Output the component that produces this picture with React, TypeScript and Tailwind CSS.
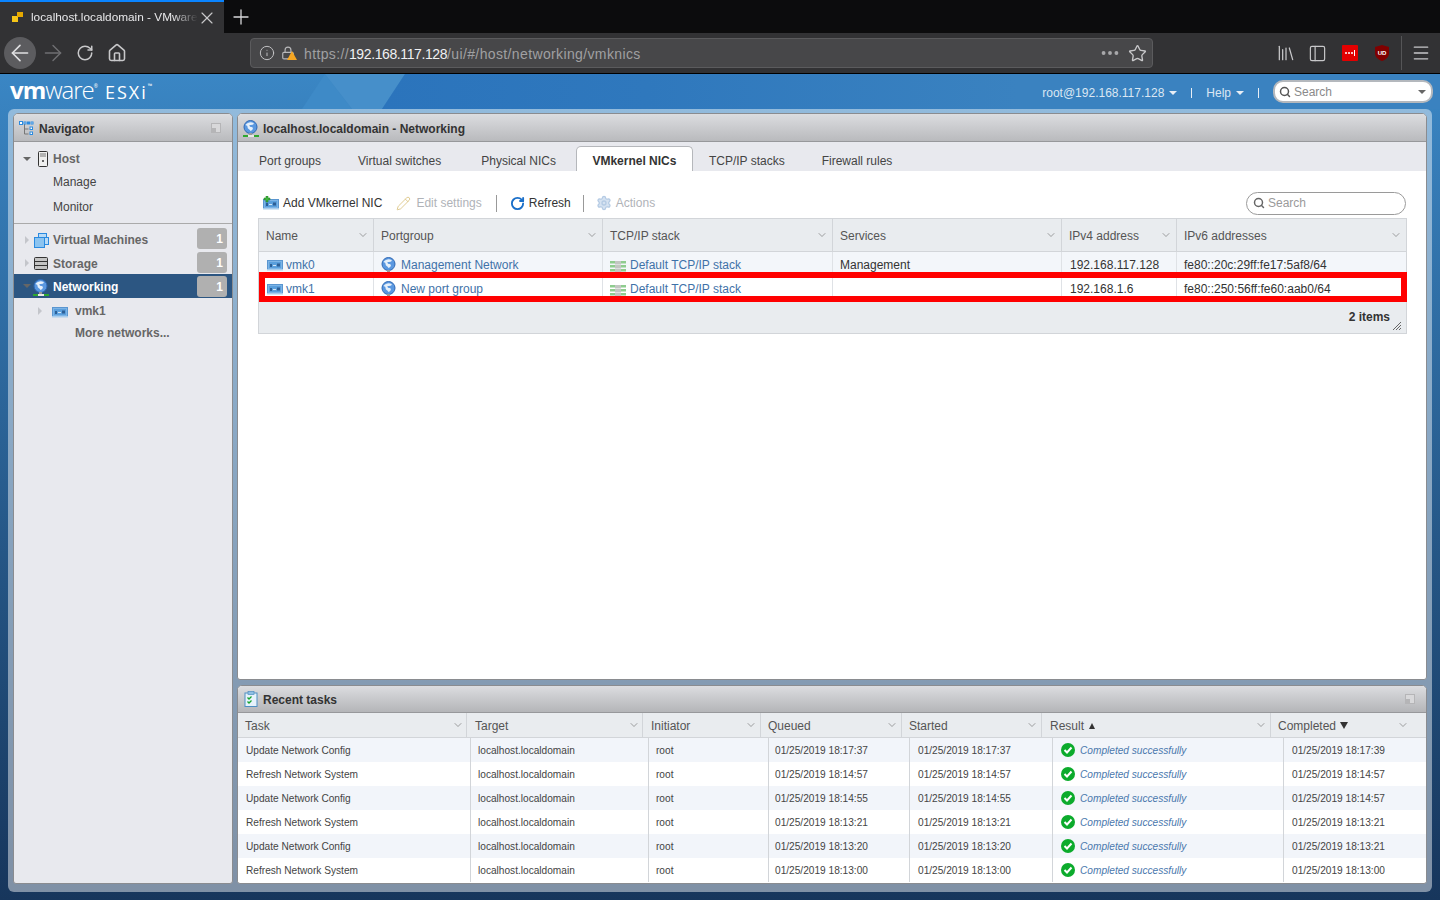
import { ArrowLeft, ArrowRight, ChevronDown, Home, Info, Library, Lock, Menu, MoreHorizontal, PanelLeft, Pencil, Plus, RotateCw, Search, Settings, Star, X } from "lucide-react";

// --- small drawn icons ---
const GlobeIcon = ({ className = "" }: { className?: string }) => (
  <svg width="16" height="17" viewBox="0 0 16 17" className={`shrink-0 mt-[2px] ${className}`}>
    <g transform="translate(-0.5 0)">
      <circle cx="8" cy="7" r="6.500" fill="#5a98e0" stroke="#2f68b4" />
      <path d="M3 5c2-3 6-3.500 8-2 1 1-1 2-3 2s-1 2 1 2 2 3-1 4c-1-2-3-2-3-4S4 6 3 5z" fill="#e6f0fa" />
    </g>
    <rect x="6" y="13" width="3" height="2" fill="#9a9a9a" />
    <rect x="0" y="15" width="16" height="2" fill="#2fa82f" />
    <rect x="5" y="15" width="6" height="2" fill="#e8e8e8" />
  </svg>
);

const NicIcon = ({ plus = false }: { plus?: boolean }) => (
  <svg width="16" height="14" viewBox="0 0 16 14" className="shrink-0">
    <rect x="0.500" y="3.500" width="15" height="9" fill="#7db4e6" stroke="#5a96d0" />
    <rect x="2" y="5" width="12" height="6" fill="#5a9fdc" />
    <rect x="3" y="7" width="2" height="3" fill="#2c5f96" />
    <rect x="6" y="8" width="3" height="1" fill="#d5e6f5" />
    <rect x="10" y="6.500" width="3" height="3" fill="#2c5f96" />
    <rect x="0" y="12" width="16" height="1.500" fill="#a9cdec" />
    {plus && <path d="M3 0v2H1v2h2v2h2V4h2V2H5V0z" fill="#3fb53f" stroke="#1f7a1f" strokeWidth="0.500" />}
  </svg>
);

const StackIcon = () => (
  <svg width="16" height="11" viewBox="0 0 16 11" className="shrink-0 mt-[4px]">
    {[0, 4, 8].map((y) => (
      <g key={y}>
        <rect x="0" y={y} width="16" height="2.500" fill="#8fcc8f" />
        <rect x="5" y={y - 0.500} width="6" height="3.500" fill="#c2c6c2" />
      </g>
    ))}
  </svg>
);

const CheckIcon = () => (
  <svg width="14" height="14" viewBox="0 0 14 14" className="shrink-0">
    <circle cx="7" cy="7" r="7" fill="#0cab2c" />
    <path d="M3.500 7l2.500 2.500 4.500-5" fill="none" stroke="#fff" strokeWidth="2" />
  </svg>
);

const TasksIcon = () => (
  <svg width="14" height="16" viewBox="0 0 14 16" className="shrink-0">
    <rect x="1" y="2" width="12" height="13.500" fill="#e6f2fb" stroke="#4f8fc2" />
    <rect x="4" y="0.500" width="6" height="3" fill="#8fbfe4" stroke="#4f8fc2" strokeWidth="0.700" />
    <path d="M3.500 6.500l1.500 1.500 2.500-2.500M3.500 10.500l1.500 1.500 2.500-2.500" fill="none" stroke="#17a52f" strokeWidth="1.300" />
  </svg>
);

const NavigatorIcon = () => (
  <svg width="16" height="16" viewBox="0 0 16 16" className="shrink-0">
    <path d="M5.500 4v10h4M5.500 9h4" fill="none" stroke="#777" />
    <g fill="#fff" stroke="#2a8ae0">
      <rect x="0.500" y="1.500" width="3" height="3" />
      <rect x="5" y="2" width="2" height="2" />
      <rect x="8.500" y="2" width="2" height="2" />
      <rect x="12" y="2" width="2" height="2" />
      <rect x="11" y="7" width="2.500" height="2.500" />
      <rect x="11" y="12" width="2.500" height="2.500" />
    </g>
  </svg>
);

const HostIcon = () => (
  <svg width="10" height="16" viewBox="0 0 10 16">
    <rect x="0.500" y="0.500" width="9" height="15" rx="1" fill="#efefef" stroke="#333" />
    <path d="M2 3h6M2 5h6" stroke="#777" />
    <rect x="4" y="9" width="2" height="2" fill="#666" />
  </svg>
);

const VmIcon = () => (
  <svg width="15" height="15" viewBox="0 0 15 15">
    <rect x="4.500" y="0.500" width="8" height="8" fill="#b9dbf6" stroke="#2a8ae0" />
    <rect x="7.500" y="4.500" width="7" height="7" fill="#b9dbf6" stroke="#2a8ae0" />
    <rect x="0.500" y="4.500" width="10" height="10" fill="#8cc4f0" stroke="#2a8ae0" />
  </svg>
);

const StorageIcon = () => (
  <svg width="14" height="13" viewBox="0 0 14 13">
    <rect x="0.500" y="0.500" width="13" height="12" rx="1" fill="#c4c4c4" stroke="#333" />
    <path d="M0.500 4.500h13M0.500 8.500h13" stroke="#333" />
  </svg>
);

const PanelIcon = () => (
  <svg width="10" height="10" viewBox="0 0 10 10" className="shrink-0">
    <rect x="0.500" y="0.500" width="9" height="9" fill="#d8d8da" stroke="#b5b5b7" />
    <rect x="1" y="5" width="4" height="4" fill="#b5b5b7" />
  </svg>
);

const Caret = ({ className }: { className: string }) => (
  <span className={`w-0 h-0 border-x-[4px] border-x-transparent border-t-[4px] ${className}`} />
);

const RightCaret = () => <span className="w-0 h-0 border-y-[4px] border-y-transparent border-l-[4px] border-l-[#c4c6cb]" />;

const ColHead = ({ label, sort, pad, pr = "pr-[4px]" }: { label: string; sort?: "up" | "down"; pad: string; pr?: string }) => (
  <div className={`flex items-center justify-between border-r border-[#d2d5d9] last:border-r-0 text-[#555] ${pad} ${pr}`}>
    <span className="flex items-center pt-[1px]">
      {label}
      {sort === "up" && <span className="ml-[5px] w-0 h-0 border-x-[3px] border-x-transparent border-b-[6px] border-b-[#333]" />}
      {sort === "down" && <span className="ml-[4px] w-0 h-0 border-x-[4px] border-x-transparent border-t-[7px] border-t-[#333]" />}
    </span>
    <ChevronDown size={12} strokeWidth={1.200} className="text-[#666]" />
  </div>
);

const Badge = () => (
  <span className="w-[30px] h-[21px] bg-[#b0b0b0] rounded-[3px] text-white font-bold text-right pr-[4px] leading-[22px]">1</span>
);

const NavRow = ({ icon, label, height, labelPad = "" }: { icon: React.ReactNode; label: string; height: string; labelPad?: string }) => (
  <div className={`flex items-center pl-[10px] pr-[5px] ${height}`}>
    <span className="w-[6px] flex justify-center"><RightCaret /></span>
    <span className="w-[16px] ml-[3px] flex justify-center">{icon}</span>
    <span className={`ml-[4px] flex-1 font-bold text-[#666] ${labelPad}`}>{label}</span>
    <span className="self-start flex"><Badge /></span>
  </div>
);

const vmkRows = [
  { name: "vmk0", group: "Management Network", services: "Management", ipv4: "192.168.117.128", ipv6: "fe80::20c:29ff:fe17:5af8/64", bg: "bg-[#f3f6fa]" },
  { name: "vmk1", group: "New port group", services: "", ipv4: "192.168.1.6", ipv6: "fe80::250:56ff:fe60:aab0/64", bg: "bg-white" },
];

const tasks = [
  ["Update Network Config", "18:17:37", "18:17:37", "18:17:39"],
  ["Refresh Network System", "18:14:57", "18:14:57", "18:14:57"],
  ["Update Network Config", "18:14:55", "18:14:55", "18:14:57"],
  ["Refresh Network System", "18:13:21", "18:13:21", "18:13:21"],
  ["Update Network Config", "18:13:20", "18:13:20", "18:13:21"],
  ["Refresh Network System", "18:13:00", "18:13:00", "18:13:00"],
];

const App = () => {
  return (
    <div className="w-[1440px] h-[900px] overflow-hidden flex flex-col text-[12px] text-[#333] font-['Liberation_Sans',Arial,sans-serif]">
      {/* browser tab strip */}
      <div className="h-[33px] bg-[#0c0c0d] flex shrink-0">
        <div className="w-[224px] bg-[#323234] border-t-2 border-[#0a84ff] flex items-center pl-[11px] text-[#e8e8ea]">
          <svg width="14" height="14" viewBox="0 0 14 14" className="shrink-0">
            <rect x="1" y="5" width="6" height="6" fill="#f5c518" />
            <rect x="6" y="1" width="6" height="5" fill="#e5a800" />
          </svg>
          <span className="ml-[6px] w-[167px] text-[11.800px] whitespace-nowrap [mask-image:linear-gradient(to_right,black_85%,transparent)]">localhost.localdomain - VMware</span>
          <X size={20} strokeWidth={1.400} className="-ml-[1px] text-[#c8c8ca]" />
        </div>
        <div className="w-[34px] flex items-center justify-center text-[#d8d8da]">
          <Plus size={24} strokeWidth={1.300} />
        </div>
      </div>

      {/* browser toolbar */}
      <div className="h-[41px] bg-[#323234] border-b border-black flex items-center shrink-0 text-[#c8c8ca]">
        <div className="ml-[4px] w-[32px] h-[32px] rounded-full bg-[#5c5c5f] flex items-center justify-center text-[#e0e0e2]">
          <ArrowLeft size={26} strokeWidth={1.500} />
        </div>
        <ArrowRight size={26} strokeWidth={1.300} className="ml-[4px] text-[#6f6f72]" />
        <RotateCw size={18} strokeWidth={2} className="ml-[10px]" />
        <Home size={20} strokeWidth={1.900} className="ml-[13px]" />
        <div className="ml-[123px] w-[903px] h-[30px] bg-[#474749] border border-[#5b5b5d] rounded-[4px] flex items-center pl-[8px] pr-[5px]">
          <Info size={16} strokeWidth={1.400} />
          <span className="relative ml-[6px] w-[15px] flex">
            <Lock size={14} strokeWidth={2} className="text-[#b8b8ba]" />
            <span className="absolute left-[6px] top-[5px] w-0 h-0 border-x-[5px] border-x-transparent border-b-[9px] border-b-[#f5a623]" />
          </span>
          <span className="ml-[8px] pt-[2px] text-[14px] tracking-[0.370px] text-[#a0a0a2]">
            https://<span className="text-[#f0f0f2] tracking-[-0.400px]">192.168.117.128</span>/ui/#/host/networking/vmknics
          </span>
          <MoreHorizontal size={22} strokeWidth={2.200} className="ml-auto text-[#a8a8aa]" />
          <Star size={19} strokeWidth={1.700} className="ml-[7px]" />
        </div>
        <Library size={20} strokeWidth={1.500} className="ml-[123px]" />
        <PanelLeft size={19} strokeWidth={1.500} className="ml-[12px]" />
        <div className="ml-[15px] w-[16px] h-[16px] bg-[#e30000] rounded-[1px] flex items-center justify-center gap-[1px]">
          <span className="w-[2px] h-[2px] rounded-full bg-white" />
          <span className="w-[2px] h-[2px] rounded-full bg-white" />
          <span className="w-[2px] h-[2px] rounded-full bg-white" />
          <span className="w-[1px] h-[6px] bg-white" />
        </div>
        <svg width="14" height="16" viewBox="0 0 14 16" className="ml-[17px]">
          <path d="M7 0l7 2v6c0 4-3 6.500-7 8-4-1.500-7-4-7-8V2z" fill="#800000" />
          <text x="7" y="10" textAnchor="middle" fontSize="6" fontWeight="bold" fill="#fff" fontFamily="Liberation Sans">UD</text>
        </svg>
        <span className="ml-[12px] w-px h-[34px] bg-[#555557]" />
        <Menu size={20} strokeWidth={1.600} className="ml-[9px]" />
      </div>

      {/* ESXi app */}
      <div className="relative flex-1 min-h-0 flex flex-col bg-gradient-to-b from-[#3a86c4] to-[#17365c]">
        <svg className="absolute left-0 top-0" width="1440" height="35" viewBox="0 0 1440 35">
          <defs>
            <linearGradient id="headerShade" x1="0" x2="1" y1="0" y2="0">
              <stop offset="0" stopColor="#2b74bc" />
              <stop offset="0.25" stopColor="#2f78bd" />
              <stop offset="0.6" stopColor="#3a82c0" />
              <stop offset="1" stopColor="#3a82c0" />
            </linearGradient>
          </defs>
          <polygon points="302,35 325,0 352,35" fill="#3e8ac7" />
          <polygon points="325,0 405,0 382,35 352,35" fill="#468fca" />
          <polygon points="405,0 1440,0 1440,35 382,35" fill="url(#headerShade)" />
        </svg>
        <div className="relative h-[35px] shrink-0 flex items-center pl-[10px] text-white">
          <span className="flex items-baseline font-['Open_Sans',sans-serif] text-[24px] leading-none tracking-[-1px] -mt-[3px]">
            <span className="font-bold">vm</span>
            <span className="font-light">ware</span>
            <span className="text-[5px] tracking-normal self-start mt-[6px]">®</span>
          </span>
          <span className="ml-[7px] flex font-['Open_Sans',sans-serif] text-[18px] font-medium leading-none tracking-[2px]">
            ESXi<span className="text-[6px] tracking-normal font-bold">™</span>
          </span>
          <span className="ml-auto pt-[2px] text-[#dbe7f3] flex items-center">
            root@192.168.117.128
            <Caret className="ml-[5px] border-t-[#e8eef5]" />
            <span className="ml-[14px] w-px h-[10px] bg-[#e8eef5]" />
            <span className="ml-[14px]">Help</span>
            <Caret className="ml-[5px] border-t-[#e8eef5]" />
            <span className="ml-[14px] w-px h-[10px] bg-[#e8eef5]" />
          </span>
          <div className="ml-[14px] mr-[7px] w-[160px] h-[23px] bg-white border-2 border-[#b4b8bd] rounded-[10px] flex items-center pl-[4px] pr-[5px] text-[#8a8a8a]">
            <Search size={12} strokeWidth={3} className="text-[#555]" />
            <span className="ml-[3px]">Search</span>
            <Caret className="ml-auto border-t-[#666]" />
          </div>
        </div>

        <div className="flex-1 min-h-0 mx-[8px] mb-[8px] bg-white/45 rounded-[6px] pt-[4px] pb-[8px] px-[5px] flex gap-[4px]">
          {/* navigator */}
          <div className="w-[220px] bg-[#e8e9ee] border border-[#8a8c90] rounded-t-[5px] rounded-b-[3px] overflow-hidden">
            <div className="h-[28px] bg-gradient-to-b from-[#dcdde0] to-[#b9babd] border-b border-[#97989b] flex items-center pl-[5px] pr-[11px]">
              <NavigatorIcon />
              <span className="ml-[4px] pt-[2px] flex-1 font-bold text-[#333]">Navigator</span>
              <PanelIcon />
            </div>
            <div className="h-[82px] pt-[5px] border-b border-[#aaa]">
              <div className="h-[23px] flex items-center pl-[9px]">
                <Caret className="border-t-[#666]" />
                <span className="ml-[6px] w-[12px] flex justify-center"><HostIcon /></span>
                <span className="ml-[4px] font-bold text-[#666]">Host</span>
              </div>
              <div className="h-[24px] pl-[39px] leading-[24px] text-[#444]">Manage</div>
              <div className="h-[24px] pl-[39px] leading-[27px] text-[#444]">Monitor</div>
            </div>
            <div className="pt-[4px]">
              <NavRow icon={<VmIcon />} label="Virtual Machines" height="h-[24px]" />
              <NavRow icon={<StorageIcon />} label="Storage" height="h-[22px]" labelPad="pt-[1px]" />
              <div className="h-[24px] bg-[#2c5682] flex items-center pl-[9px] pr-[5px]">
                <Caret className="border-t-[#666]" />
                <GlobeIcon className="ml-[2px]" />
                <span className="ml-[4px] pt-[2px] flex-1 font-bold text-white">Networking</span>
                <Badge />
              </div>
              <div className="h-[25px] flex items-center pl-[24px]">
                <RightCaret />
                <span className="ml-[10px]"><NicIcon /></span>
                <span className="ml-[7px] font-bold text-[#666]">vmk1</span>
              </div>
              <div className="h-[20px] pl-[61px] leading-[20px] font-bold text-[#666]">More networks...</div>
            </div>
          </div>

          <div className="flex-1 min-w-0 flex flex-col gap-[5px]">
            {/* networking panel */}
            <div className="flex-1 min-h-0 bg-white border border-[#8a8c90] rounded-t-[5px] rounded-b-[3px] overflow-hidden flex flex-col">
              <div className="h-[28px] shrink-0 bg-gradient-to-b from-[#dcdde0] to-[#b9babd] border-b border-[#97989b] flex items-center pl-[5px]">
                <GlobeIcon />
                <span className="ml-[4px] pt-[2px] font-bold text-[#333]">localhost.localdomain - Networking</span>
              </div>
              <div className="h-[29px] shrink-0 bg-[#e8e9ee] flex items-end pl-[21px] text-[#444]">
                <span className="h-[25px] leading-[30px]">Port groups</span>
                <span className="h-[25px] leading-[30px] ml-[37px]">Virtual switches</span>
                <span className="h-[25px] leading-[30px] ml-[40px]">Physical NICs</span>
                <span className="ml-[20px] w-[117px] h-[25px] bg-white border border-b-0 border-[#b5b7bb] rounded-t-[5px] text-center font-bold text-[#333] leading-[28px]">VMkernel NICs</span>
                <span className="h-[25px] leading-[30px] ml-[16px]">TCP/IP stacks</span>
                <span className="h-[25px] leading-[30px] ml-[37px]">Firewall rules</span>
              </div>

              <div className="flex-1 min-h-0 pl-[20px] pr-[19px]">
                {/* toolbar */}
                <div className="h-[47px] pt-[17px] flex items-center pl-[5px]">
                  <NicIcon plus />
                  <span className="ml-[4px] text-[#333]">Add VMkernel NIC</span>
                  <Pencil size={15} strokeWidth={1.300} className="ml-[14px] text-[#d9c07a]" />
                  <span className="ml-[5px] text-[#b0b3b8]">Edit settings</span>
                  <span className="ml-[14px] w-px h-[17px] bg-[#999]" />
                  <RotateCw size={15} strokeWidth={3} className="ml-[13px] text-[#1a6fc9]" />
                  <span className="ml-[4px] text-[#333]">Refresh</span>
                  <span className="ml-[12px] w-px h-[17px] bg-[#999]" />
                  <Settings size={16} strokeWidth={2} className="ml-[12px] text-[#b5cbe4] fill-[#d5e2f1]" />
                  <span className="ml-[4px] text-[#b0b3b8]">Actions</span>
                  <div className="ml-auto mr-[1px] w-[160px] h-[23px] border border-[#9a9a9a] rounded-full flex items-center pl-[6px] text-[#9a9a9a]">
                    <Search size={12} strokeWidth={3} className="text-[#666]" />
                    <span className="ml-[3px]">Search</span>
                  </div>
                </div>

                {/* vmkernel grid */}
                <div className="relative border border-[#d2d5d9] bg-[#e9ecef]">
                  <div className="h-[33px] grid grid-cols-[115px_229px_230px_229px_115px_1fr] border-b border-[#d2d5d9]">
                    {["Name", "Portgroup", "TCP/IP stack", "Services", "IPv4 address", "IPv6 addresses"].map((h) => (
                      <ColHead key={h} label={h} pad="pl-[7px]" />
                    ))}
                  </div>
                  {vmkRows.map((row) => (
                    <div key={row.name} className={`h-[24px] grid grid-cols-[115px_229px_230px_229px_115px_1fr] ${row.bg}`}>
                      <div className="pl-[8px] flex items-center gap-[3px] border-r border-[#dfe2e6] text-[#3f72a8]"><NicIcon /><span className="pt-[2px]">{row.name}</span></div>
                      <div className="pl-[7px] flex items-center gap-[4px] border-r border-[#dfe2e6] text-[#3f72a8]"><GlobeIcon /><span className="pt-[2px]">{row.group}</span></div>
                      <div className="pl-[7px] flex items-center gap-[4px] border-r border-[#dfe2e6] text-[#3f72a8]"><StackIcon /><span className="pt-[2px]">Default TCP/IP stack</span></div>
                      <div className="pl-[7px] pt-[2px] flex items-center border-r border-[#dfe2e6]">{row.services}</div>
                      <div className="pl-[8px] pt-[2px] flex items-center border-r border-[#dfe2e6]">{row.ipv4}</div>
                      <div className="pl-[7px] pt-[2px] flex items-center">{row.ipv6}</div>
                    </div>
                  ))}
                  <div className="relative h-[33px] flex items-center justify-end pr-[16px] font-bold text-[#333]">
                    2 items
                    <svg width="8" height="8" viewBox="0 0 8 8" className="absolute right-[5px] bottom-[3px]">
                      <path d="M8 0L0 8M8 3L3 8M8 6L6 8" stroke="#666" />
                    </svg>
                  </div>
                  {/* red highlight drawn on top of the screenshot */}
                  <div className="absolute left-0 -right-px top-[53px] h-[30px] border-[6px] border-[#ff0000]" />
                </div>
              </div>
            </div>

            {/* recent tasks */}
            <div className="h-[199px] shrink-0 bg-white border border-[#8a8c90] rounded-t-[5px] rounded-b-[3px] overflow-hidden flex flex-col">
              <div className="h-[27px] shrink-0 bg-gradient-to-b from-[#dcdde0] to-[#b4b5b8] border-b border-[#97989b] flex items-center pl-[6px] pr-[11px]">
                <TasksIcon />
                <span className="ml-[5px] pt-[2px] flex-1 font-bold text-[#333]">Recent tasks</span>
                <PanelIcon />
              </div>
              <div className="h-[25px] shrink-0 bg-[#e9ecef] border-b border-[#d2d5d9] grid grid-cols-[229px_176px_118px_141px_140px_229px_1fr]">
                <ColHead label="Task" pad="pl-[7px]" pr="pr-[2px]" />
                <ColHead label="Target" pad="pl-[8px]" pr="pr-[2px]" />
                <ColHead label="Initiator" pad="pl-[8px]" pr="pr-[3px]" />
                <ColHead label="Queued" pad="pl-[7px]" pr="pr-[3px]" />
                <ColHead label="Started" pad="pl-[7px]" pr="pr-[3px]" />
                <ColHead label="Result" sort="up" pad="pl-[8px]" pr="pr-[3px]" />
                <ColHead label="Completed" sort="down" pad="pl-[7px]" pr="pr-[17px]" />
              </div>
              <div className="text-[10.150px] text-[#444]">
                {tasks.map((t, i) => (
                  <div key={i} className={`h-[24px] grid grid-cols-[233px_178px_120px_141px_143px_231px_1fr] items-stretch ${i % 2 === 0 ? "bg-[#f2f5fa]" : "bg-white"}`}>
                    <div className="pl-[8px] pt-[2px] flex items-center border-r border-[#d2d5d9]">{t[0]}</div>
                    <div className="pl-[7px] pt-[2px] flex items-center border-r border-[#d2d5d9]">localhost.localdomain</div>
                    <div className="pl-[7px] pt-[2px] flex items-center border-r border-[#d2d5d9]">root</div>
                    <div className="pl-[6px] pt-[2px] flex items-center border-r border-[#d2d5d9]">01/25/2019 {t[1]}</div>
                    <div className="pl-[8px] pt-[2px] flex items-center border-r border-[#d2d5d9]">01/25/2019 {t[2]}</div>
                    <div className="pl-[8px] flex items-center gap-[5px] border-r border-[#d2d5d9] italic text-[#4a78ad]"><CheckIcon /><span className="pt-[2px]">Completed successfully</span></div>
                    <div className="pl-[8px] pt-[2px] flex items-center">01/25/2019 {t[3]}</div>
                  </div>
                ))}
              </div>
            </div>
          </div>
        </div>
      </div>
    </div>
  );
};

export default App;
